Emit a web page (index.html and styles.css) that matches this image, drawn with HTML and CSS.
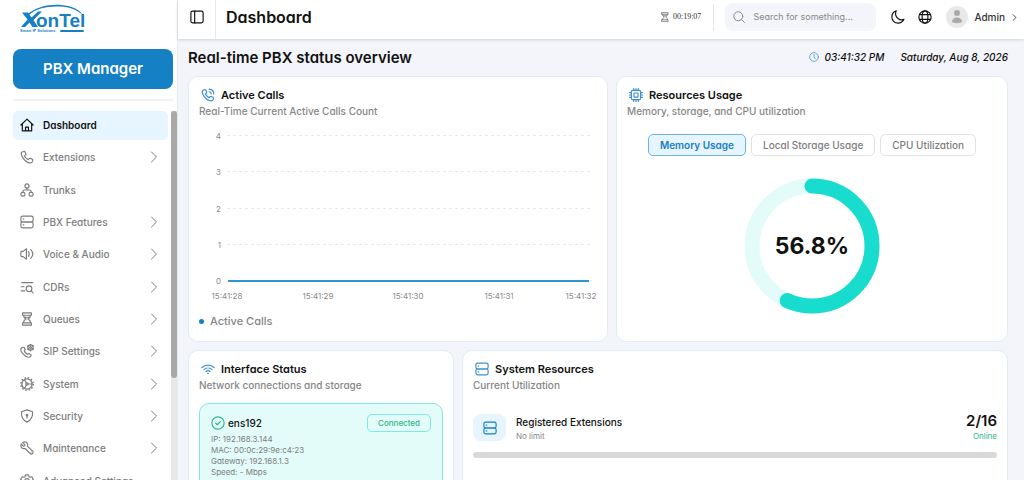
FILE: index.html
```
<!DOCTYPE html>
<html lang="en">
    <head>
        <meta charset="utf-8">
        <meta name="viewport" content="width=device-width, initial-scale=1" />
        <title>PBX Manager - Dashboard</title>
        <link rel="stylesheet" href="styles.css">
    </head>
    <body>
        <!-- shared icons -->
        <svg class="sprite" aria-hidden="true">
            <symbol id="i-chevron" viewBox="0 0 24 24"><path d="M7 2l10 10L7 22"/></symbol>
            <symbol id="i-home" viewBox="0 0 24 24"><path d="M1.500 12L12 2l10.500 10M4 10v12h16V10M9.500 22v-6.500h5V22"/></symbol>
            <symbol id="i-phone" viewBox="0 0 24 24"><path d="M6.500 2.500L3.500 3.500C1.500 5 2 9 5 13.500S14 22 18 22c2 0 3.500-1.500 4-4 .2-1-.2-1.700-1-2.100l-3.300-1.500c-.8-.3-1.500-.1-2 .5L14 16.500C11 15 8.500 12.500 7.500 10l2-1.600c.6-.5.8-1.200.5-2L8.700 3.500c-.4-.9-1.200-1.300-2.200-1z"/></symbol>
            <symbol id="i-trunks" viewBox="0 0 24 24"><circle cx="12" cy="5" r="3.500"/><rect x="1.500" y="16" width="7" height="6.500" rx="3"/><rect x="15.500" y="16" width="7" height="6.500" rx="3"/><path d="M12 8.500V12M5 16v-1.500c0-1.500 1-2.500 2.500-2.500h9c1.500 0 2.500 1 2.500 2.500V16"/></symbol>
            <symbol id="i-server" viewBox="0 0 24 24"><rect x="1.500" y="2" width="21" height="10" rx="3"/><rect x="1.500" y="12" width="21" height="10" rx="3"/><path d="M5.500 7h1M5.500 17h1"/></symbol>
            <symbol id="i-audio" viewBox="0 0 24 24"><path d="M1.500 9v6c0 1 .5 1.500 1.500 1.500h2.500L11 21V3L5.500 7.500H3c-1 0-1.500.5-1.500 1.500zM14.500 8c1.500 2.500 1.500 5.500 0 8M18.500 4.500c4 4.500 4 10.500 0 15"/></symbol>
            <symbol id="i-cdr" viewBox="0 0 24 24"><path d="M3 4.500h19M2 11.500h5M2 18.500h6M19 18.500l3.500 3.500"/><circle cx="15.500" cy="15" r="4.800"/></symbol>
            <symbol id="i-glass" viewBox="0 0 24 24"><path d="M4.500 1.500h15v4h-15zM4.500 18.500h15v4h-15zM6 5.500c0 4 2 5 4.500 6.500C8 13.500 6 14.500 6 18.500M18 5.500c0 4-2 5-4.500 6.500 2.500 1.500 4.500 2.500 4.500 6.500M8 9h8"/></symbol>
            <symbol id="i-sip" viewBox="0 0 24 24"><path d="M4.500 6L2 7.500C.5 9.500 1.500 13 5 17s8.500 6 11 5.500c2-.5 3-2 3.200-3.700l-4-2.600-2.500 1.600C9.500 16 8 14 7.200 11.500L9 9.500 6.800 5.500z"/><circle cx="18" cy="6" r="4.600"/><circle cx="18" cy="6" r="1.600"/><path d="M18 0v2M18 10v2M12.800 3l1.700 1M21.500 8l1.700 1M12.800 9l1.700-1M21.500 4l1.700-1"/></symbol>
            <symbol id="i-system" viewBox="0 0 24 24"><circle cx="12" cy="12" r="10.800" stroke-width="2.400" stroke-dasharray="2.500 3.150" stroke-linecap="butt"/><circle cx="12" cy="12" r="8.800" stroke-width="2.400"/><circle cx="12" cy="12" r="2"/><path d="M14 12h6.500M11 10L7.500 4.500M11 14l-3.500 5.500"/></symbol>
            <symbol id="i-shield" viewBox="0 0 24 24"><path d="M12 1.500l9.500 3.300c.8 8.700-1.500 14-9.500 17.700C4 18.800 1.700 13.500 2.500 4.800z"/><circle cx="12" cy="10.500" r="1.300"/><path d="M12 11.800v3.700"/></symbol>
            <symbol id="i-wrench" viewBox="0 0 24 24"><path d="M4.500 2.500l4 4-.5 2-2 .5-4-4C1 8.500 2 11.500 4.500 12.700c1.500.7 2.800.5 4.200.1l8.700 8.700c1.300 1.200 3 1.200 4.100 0 1.200-1.200 1.200-2.900 0-4.100l-8.700-8.700c.4-1.500.5-2.800-.2-4.200C11.300 2 8 1 4.500 2.500z"/><path d="M18.800 18.800h.2"/></symbol>
            <symbol id="i-gear" viewBox="0 0 24 24"><path d="M9.500 1.500h5l.8 3 2 1.100 3-.8 2.500 4.200-2.200 2.200v1.600l2.200 2.200-2.500 4.200-3-.8-2 1.100-.8 3h-5l-.8-3-2-1.100-3 .8L1.200 15l2.200-2.200v-1.600L1.200 9l2.500-4.200 3 .8 2-1.100z"/><circle cx="12" cy="12" r="4"/></symbol>
            <symbol id="i-call" viewBox="0 0 24 24"><path d="M6 3L3.500 4C1.500 5.500 2 9.500 5 14s8.500 8 12.500 8c2 0 3.500-1.500 4-4l-.8-2-3.500-1.500-2 .5-1.500 1.700C11 15 8.500 12.500 7.500 10.200L9.300 8.500l.5-2L8.300 3.700C7.800 3 7 2.700 6 3zM14 6.500c2 .3 3.300 1.500 3.600 3.500M14 2c4.700.5 7.500 3.300 8 8"/></symbol>
            <symbol id="i-chip" viewBox="0 0 24 24"><rect x="4" y="4" width="16" height="16" rx="2.500"/><rect x="8.500" y="8.500" width="7" height="7" rx="1"/><path d="M8 1v3M12 1v3M16 1v3M8 20v3M12 20v3M16 20v3M1 8h3M1 12h3M1 16h3M20 8h3M20 12h3M20 16h3"/></symbol>
            <symbol id="i-wifi" viewBox="0 0 24 24"><path d="M1.500 9.500c6-5.500 15-5.500 21 0M5 13c4-3.600 10-3.600 14 0M8.500 16.200c2-1.700 5-1.700 7 0M11.500 19.500h1"/></symbol>
            <symbol id="i-check" viewBox="0 0 24 24"><circle cx="12" cy="12" r="10.500"/><path d="M8 12.500l2.800 2.500L16 9.500"/></symbol>
            <symbol id="i-clock" viewBox="0 0 24 24"><circle cx="12" cy="12" r="10.500"/><path d="M12 5.500V12l3.500 4.500"/></symbol>
            <symbol id="i-search" viewBox="0 0 24 24"><circle cx="10.500" cy="10.500" r="9"/><path d="M17 17l6 6"/></symbol>
            <symbol id="i-panel" viewBox="0 0 24 24"><rect x="1.500" y="2" width="21" height="20" rx="3"/><path d="M8 2v20" /></symbol>
            <symbol id="i-moon" viewBox="0 0 24 24"><path d="M9 1.500C4.500 3 1.500 7 1.500 12c0 6 4.500 10.500 10.500 10.500 4.500 0 8.500-2.500 10.200-6.500-3.200 1.300-7.200 1-10.200-1.500C8 11.500 7 6 9 1.500z"/></symbol>
            <symbol id="i-globe" viewBox="0 0 24 24"><circle cx="12" cy="12" r="10.500"/><ellipse cx="12" cy="12" rx="5" ry="10.500"/><path d="M3 8h18M3 16h18"/></symbol>
        </svg>

        <div class="app">
            <aside class="sidebar">
                <a class="logo" href="#" aria-label="XonTel Smart IP Solutions">
                    <svg width="66" height="28" viewBox="0 0 66 28">
                        <path class="logo-fill" d="M7 10.500C16 3 29 0 41 1c10 .8 18 4 22 10-6-5-13-8-23-8.500C27 1.800 16 4.500 9.500 10.500z"/>
                        <path class="logo-fill" d="M2 8.500h6l3.500 5L18 7.500h4L13.500 16l4.500 7h-5.500L9.500 18.500 5 23H1l6.500-7.500z"/>
                        <text class="logo-name" x="16" y="23">onTel</text>
                        <text class="logo-tag" x="0" y="28">Smart IP Solutions</text>
                        <path class="logo-line" d="M41 27h22"/>
                    </svg>
                </a>
                <a class="product" href="#">PBX Manager</a>
                <div class="divider"></div>
                <div class="nav-wrap">
                    <nav class="nav">
                        <a class="nav-item active" href="#"><svg class="icon"><use href="#i-home"/></svg><span>Dashboard</span></a>
                        <a class="nav-item" href="#"><svg class="icon"><use href="#i-phone"/></svg><span>Extensions</span><svg class="chevron"><use href="#i-chevron"/></svg></a>
                        <a class="nav-item" href="#"><svg class="icon"><use href="#i-trunks"/></svg><span>Trunks</span></a>
                        <a class="nav-item" href="#"><svg class="icon"><use href="#i-server"/></svg><span>PBX Features</span><svg class="chevron"><use href="#i-chevron"/></svg></a>
                        <a class="nav-item" href="#"><svg class="icon"><use href="#i-audio"/></svg><span>Voice &amp; Audio</span><svg class="chevron"><use href="#i-chevron"/></svg></a>
                        <a class="nav-item" href="#"><svg class="icon"><use href="#i-cdr"/></svg><span>CDRs</span><svg class="chevron"><use href="#i-chevron"/></svg></a>
                        <a class="nav-item" href="#"><svg class="icon"><use href="#i-glass"/></svg><span>Queues</span><svg class="chevron"><use href="#i-chevron"/></svg></a>
                        <a class="nav-item" href="#"><svg class="icon"><use href="#i-sip"/></svg><span>SIP Settings</span><svg class="chevron"><use href="#i-chevron"/></svg></a>
                        <a class="nav-item" href="#"><svg class="icon"><use href="#i-system"/></svg><span>System</span><svg class="chevron"><use href="#i-chevron"/></svg></a>
                        <a class="nav-item" href="#"><svg class="icon"><use href="#i-shield"/></svg><span>Security</span><svg class="chevron"><use href="#i-chevron"/></svg></a>
                        <a class="nav-item" href="#"><svg class="icon"><use href="#i-wrench"/></svg><span>Maintenance</span><svg class="chevron"><use href="#i-chevron"/></svg></a>
                        <a class="nav-item" href="#"><svg class="icon"><use href="#i-gear"/></svg><span>Advanced Settings</span></a>
                    </nav>
                    <div class="scrollbar"><div class="thumb"></div></div>
                </div>
            </aside>

            <div class="page">
                <header class="topbar">
                    <button class="icon-btn toggle" aria-label="Toggle sidebar"><svg class="icon"><use href="#i-panel"/></svg></button>
                    <h1>Dashboard</h1>
                    <div class="timer"><svg class="icon-tiny"><use href="#i-glass"/></svg><span>00:19:07</span></div>
                    <label class="search">
                        <svg class="icon-small"><use href="#i-search"/></svg>
                        <input type="text" placeholder="Search for something..." aria-label="Search">
                    </label>
                    <button class="icon-btn" aria-label="Dark mode"><svg class="icon"><use href="#i-moon"/></svg></button>
                    <button class="icon-btn" aria-label="Language"><svg class="icon"><use href="#i-globe"/></svg></button>
                    <button class="user">
                        <svg class="avatar" viewBox="0 0 22 22"><circle cx="11" cy="11" r="11" fill="#e9e9e9"/><circle cx="11" cy="7" r="3" fill="#aaa"/><path d="M6 16c0-3 2-4.500 5-4.500s5 1.500 5 4.500c-2 1.500-8 1.500-10 0z" fill="#aaa"/></svg>
                        <span>Admin</span>
                        <svg class="user-arrow"><use href="#i-chevron"/></svg>
                    </button>
                </header>

                <main class="content">
                    <div class="title-row">
                        <h2>Real-time PBX status overview</h2>
                        <div class="datetime">
                            <svg class="icon-tiny"><use href="#i-clock"/></svg>
                            <time>03:41:32 PM</time>
                            <time class="date">Saturday, Aug 8, 2026</time>
                        </div>
                    </div>

                    <div class="row row-top">
                        <section class="card">
                            <h3><svg class="icon"><use href="#i-call"/></svg>Active Calls</h3>
                            <p class="sub">Real-Time Current Active Calls Count</p>
                            <svg class="chart" viewBox="0 0 398 180">
                                <g class="grid">
                                    <path d="M28 10.500h363M28 46.500h363M28 83.500h363M28 119.500h363"/>
                                </g>
                                <path class="line" d="M29 156h361"/>
                                <g class="y-axis">
                                    <text x="22" y="14">4</text>
                                    <text x="22" y="50">3</text>
                                    <text x="22" y="87">2</text>
                                    <text x="22" y="123">1</text>
                                    <text x="22" y="159">0</text>
                                </g>
                                <g class="x-axis">
                                    <text x="28" y="174">15:41:28</text>
                                    <text x="119" y="174">15:41:29</text>
                                    <text x="209" y="174">15:41:30</text>
                                    <text x="300" y="174">15:41:31</text>
                                    <text x="382" y="174">15:41:32</text>
                                </g>
                            </svg>
                            <div class="legend"><i class="dot"></i>Active Calls</div>
                        </section>

                        <section class="card">
                            <h3><svg class="icon"><use href="#i-chip"/></svg>Resources Usage</h3>
                            <p class="sub">Memory, storage, and CPU utilization</p>
                            <div class="tabs">
                                <button class="tab selected">Memory Usage</button>
                                <button class="tab">Local Storage Usage</button>
                                <button class="tab">CPU Utilization</button>
                            </div>
                            <svg class="donut" viewBox="0 0 136 136">
                                <circle class="donut-track" cx="68" cy="68" r="60"/>
                                <circle class="donut-value" cx="68" cy="68" r="60" pathLength="100" stroke-dasharray="56.8 100" transform="rotate(-90 68 68)"/>
                                <text x="68" y="76">56.8%</text>
                            </svg>
                        </section>
                    </div>

                    <div class="row row-bottom">
                        <section class="card">
                            <h3><svg class="icon"><use href="#i-wifi"/></svg>Interface Status</h3>
                            <p class="sub">Network connections and storage</p>
                            <div class="iface">
                                <div class="iface-head">
                                    <svg class="icon"><use href="#i-check"/></svg>
                                    <span>ens192</span>
                                    <span class="badge">Connected</span>
                                </div>
                                <ul>
                                    <li>IP: 192.168.3.144</li>
                                    <li>MAC: 00:0c:29:9e:c4:23</li>
                                    <li>Gateway: 192.168.1.3</li>
                                    <li>Speed: - Mbps</li>
                                </ul>
                            </div>
                        </section>

                        <section class="card">
                            <h3><svg class="icon"><use href="#i-server"/></svg>System Resources</h3>
                            <p class="sub">Current Utilization</p>
                            <div class="resource">
                                <div class="tile"><svg class="icon"><use href="#i-server"/></svg></div>
                                <div class="resource-text">
                                    <strong>Registered Extensions</strong>
                                    <small>No limit</small>
                                </div>
                                <div class="resource-count">
                                    <b>2/16</b>
                                    <small>Online</small>
                                </div>
                            </div>
                            <div class="bar"></div>
                        </section>
                    </div>
                </main>
            </div>
        </div>
    </body>
</html>
```
FILE: styles.css
```
* {
    box-sizing: border-box;
}

body {
    margin: 0px;
    background: #f3f5fa;
    color: #111;
    font-family: Inter, "Liberation Sans", sans-serif;
    font-feature-settings: "cv11"; /* single-storey a */
    font-size: 10px;
    font-weight: 500;
    line-height: 16px;
}

h1, h2, h3, p, ul {
    margin: 0px;
    padding: 0px;
}

ul {
    list-style: none;
}

a {
    color: inherit;
    text-decoration: none;
}

button, input {
    font: inherit;
    font-feature-settings: inherit;
    color: inherit;
    border: 0;
    padding: 0;
    background: none;
}

svg {
    display: block;
    flex: none;
    fill: none;
    stroke: currentColor;
    stroke-width: 2px;
    stroke-linecap: round;
    stroke-linejoin: round;
}

.sprite {
    position: absolute;
    width: 0;
    height: 0;
}

svg text {
    stroke: none;
}

.icon {
    width: 14px;
    height: 14px;
}

.icon-small {
    width: 12px;
    height: 12px;
}

.icon-tiny {
    width: 10px;
    height: 10px;
}

.app {
    display: flex;
    height: 100vh;
    overflow: hidden;
}

/* sidebar */

.sidebar {
    display: flex;
    flex-direction: column;
    flex: none;
    width: 178px;
    background: white;
    border-right: 1px solid #e4e9f2;
}

.logo {
    margin: 4px 0 0 20px;
    height: 45px;
    color: #1580c4;
}

.logo svg {
    overflow: visible;
}

.logo-fill {
    fill: currentColor;
    stroke: none;
}

.logo-line {
    stroke-width: 2px;
}

.logo-name {
    font: bold 19px "Liberation Sans", sans-serif;
    fill: currentColor;
}

.logo-tag {
    font: bold 4px "Liberation Sans", sans-serif;
    fill: currentColor;
}

.product {
    margin-left: 13px;
    width: 160px;
    line-height: 40px;
    border-radius: 8px;
    background: #1580c4;
    color: white;
    font-size: 15px;
    font-weight: 600;
    text-align: center;
}

.divider {
    margin: 10px 4px 10px 13px;
    height: 2px;
    background: #f2f2f2;
}

.nav-wrap {
    display: flex;
    flex: 1;
    min-height: 0;
    overflow: hidden;
    justify-content: space-between;
    padding-left: 13px;
}

.nav {
    display: grid;
    flex: none;
    width: 155px;
    height: 385px;
    grid-auto-rows: 1fr;
    row-gap: 3px;
}

.nav-item {
    display: flex;
    align-items: center;
    gap: 9px;
    padding: 0 8px 1px 7px;
    border-radius: 5px;
    color: #7d7d7d;
}

.nav-item.active {
    background: #e6f5ff;
    color: #111;
    font-weight: 600;
}

.chevron {
    width: 12px;
    height: 12px;
    margin-left: auto;
}

.scrollbar {
    width: 6px;
    background: #e8e8e8;
}

.thumb {
    height: 267px;
    border-radius: 3px;
    background: #a8a8a8;
}

/* top bar */

.page {
    flex: 1;
    min-width: 0;
}

.topbar {
    display: flex;
    align-items: center;
    height: 39px;
    padding: 0 6px 5px 0;
    background: white;
    box-shadow: 0 1px 3px rgba(0, 0, 0, 0.15);
}

.icon-btn {
    display: flex;
    justify-content: center;
    width: 27px;
}

.toggle {
    align-items: center;
    width: 38px;
    height: 39px;
    margin-bottom: -5px;
    padding-bottom: 5px;
    border-right: 1px solid #e4e9f2;
}

h1 {
    margin-left: 10px;
    font-size: 16px;
    font-weight: 600;
}

.timer {
    display: flex;
    align-items: center;
    gap: 3px;
    margin-left: auto;
    height: 27px;
    padding-right: 12px;
    border-right: 1px solid #dfe8f2;
    color: #333;
    font-family: "Liberation Serif", serif;
    font-size: 8px;
}

.timer svg {
    color: #777;
}

.search {
    display: flex;
    align-items: center;
    gap: 8px;
    width: 151px;
    height: 28px;
    margin: 0 8px 0 11px;
    padding: 0 8px;
    border-radius: 8px;
    background: #f3f5fa;
    color: #888;
}

.search input {
    flex: 1;
    min-width: 0;
    font-size: 9px;
    font-weight: 400;
    outline: none;
}

.search input::placeholder {
    color: #888;
}

.user {
    display: flex;
    align-items: center;
    gap: 6px;
    margin-left: 8px;
    color: #333;
}

.user-arrow {
    width: 7px;
    height: 7px;
    stroke-width: 3px;
}

.avatar {
    width: 22px;
    height: 22px;
    stroke: none;
}

/* content */

.content {
    padding: 9px 16px 0 10px;
}

.title-row {
    display: flex;
    align-items: center;
    justify-content: space-between;
    height: 20px;
    margin-bottom: 8px;
}

h2 {
    font-size: 15px;
    font-weight: 600;
}

.datetime {
    display: flex;
    align-items: center;
    gap: 5px;
    padding-bottom: 2px;
    font-style: italic;
}

.datetime svg {
    color: #4b9fd6;
}

.date {
    margin-left: 11px;
}

.row {
    display: grid;
    gap: 8px;
    margin-bottom: 8px;
}

.row-top {
    grid-template-columns: 15fr 14fr;
}

.row-bottom {
    grid-template-columns: 19fr 39fr;
}

.card {
    min-width: 0;
    padding: 10px;
    border: 1px solid #e0edf5;
    border-radius: 10px;
    background: white;
}

.row-top .card {
    min-height: 266px;
}

h3 {
    display: flex;
    align-items: center;
    gap: 6px;
    font-size: 11px;
    font-weight: 600;
}

h3 .icon {
    margin-left: 2px;
    color: #3b8fd0;
}

.sub {
    color: #868686;
}

.chart {
    width: 100%;
    margin-top: 6px;
    overflow: visible;
}

.chart text {
    fill: #8a8a8a;
    font-size: 8px;
    font-weight: 400;
}

.grid {
    stroke: #dcecf2;
    stroke-width: 1px;
    stroke-dasharray: 3 3;
    stroke-linecap: butt;
}

.line {
    stroke: #2f94d3;
    stroke-width: 2px;
    stroke-linecap: butt;
}

.y-axis {
    text-anchor: end;
}

.x-axis {
    text-anchor: middle;
}

.legend {
    display: flex;
    align-items: center;
    gap: 6px;
    margin-top: 8px;
    color: #868686;
    font-size: 11px;
}

.dot {
    width: 5px;
    height: 5px;
    border-radius: 50%;
    background: #1580c4;
}

.tabs {
    display: flex;
    justify-content: center;
    gap: 5px;
    margin: 15px 0 22px;
}

.tab {
    height: 22px;
    padding: 0 11px;
    border: 1px solid #e2e2e2;
    border-radius: 5px;
    color: #7d7d7d;
}

.tab.selected {
    border-color: #6db4e2;
    background: #e6f5ff;
    color: #1580c4;
    font-weight: 600;
}

.donut {
    width: 136px;
    margin: 0 auto;
    stroke-width: 15px;
}

.donut-track {
    stroke: #e3fcfa;
}

.donut-value {
    stroke: #18dccd;
}

.donut text {
    fill: #111;
    font-size: 23px;
    font-weight: 700;
    text-anchor: middle;
}

/* bottom cards */

.iface {
    margin-top: 10px;
    padding: 10px 11px;
    min-height: 110px;
    border: 1px solid #7eeae1;
    border-radius: 10px;
    background: #e3fcfa;
}

.iface-head {
    display: flex;
    align-items: center;
    gap: 3px;
}

.iface-head .icon {
    color: #2fb589;
}

.badge {
    margin-left: auto;
    padding: 0 10px;
    border: 1px solid #7eeae1;
    border-radius: 5px;
    color: #2fb589;
    font-size: 8px;
}

.iface ul {
    color: #7d7d7d;
    font-size: 8px;
    font-weight: 400;
    line-height: 11px;
    margin-top: 2px;
}

.resource {
    display: flex;
    align-items: center;
    gap: 10px;
    margin-top: 20px;
}

.tile {
    display: flex;
    align-items: center;
    justify-content: center;
    width: 33px;
    height: 27px;
    border-radius: 8px;
    background: #e6f5ff;
    color: #1580c4;
}

.resource small {
    display: block;
    color: #868686;
    font-size: 8px;
    font-weight: 400;
    line-height: 12px;
}

.resource strong {
    font-weight: 500;
}

.resource-count {
    margin-left: auto;
    text-align: right;
}

.resource-count b {
    font-size: 15px;
    font-weight: 600;
}

.resource-count small {
    color: #2fb589;
}

.bar {
    height: 6px;
    margin-top: 10px;
    border-radius: 3px;
    background: #d9d9d9;
}
```
